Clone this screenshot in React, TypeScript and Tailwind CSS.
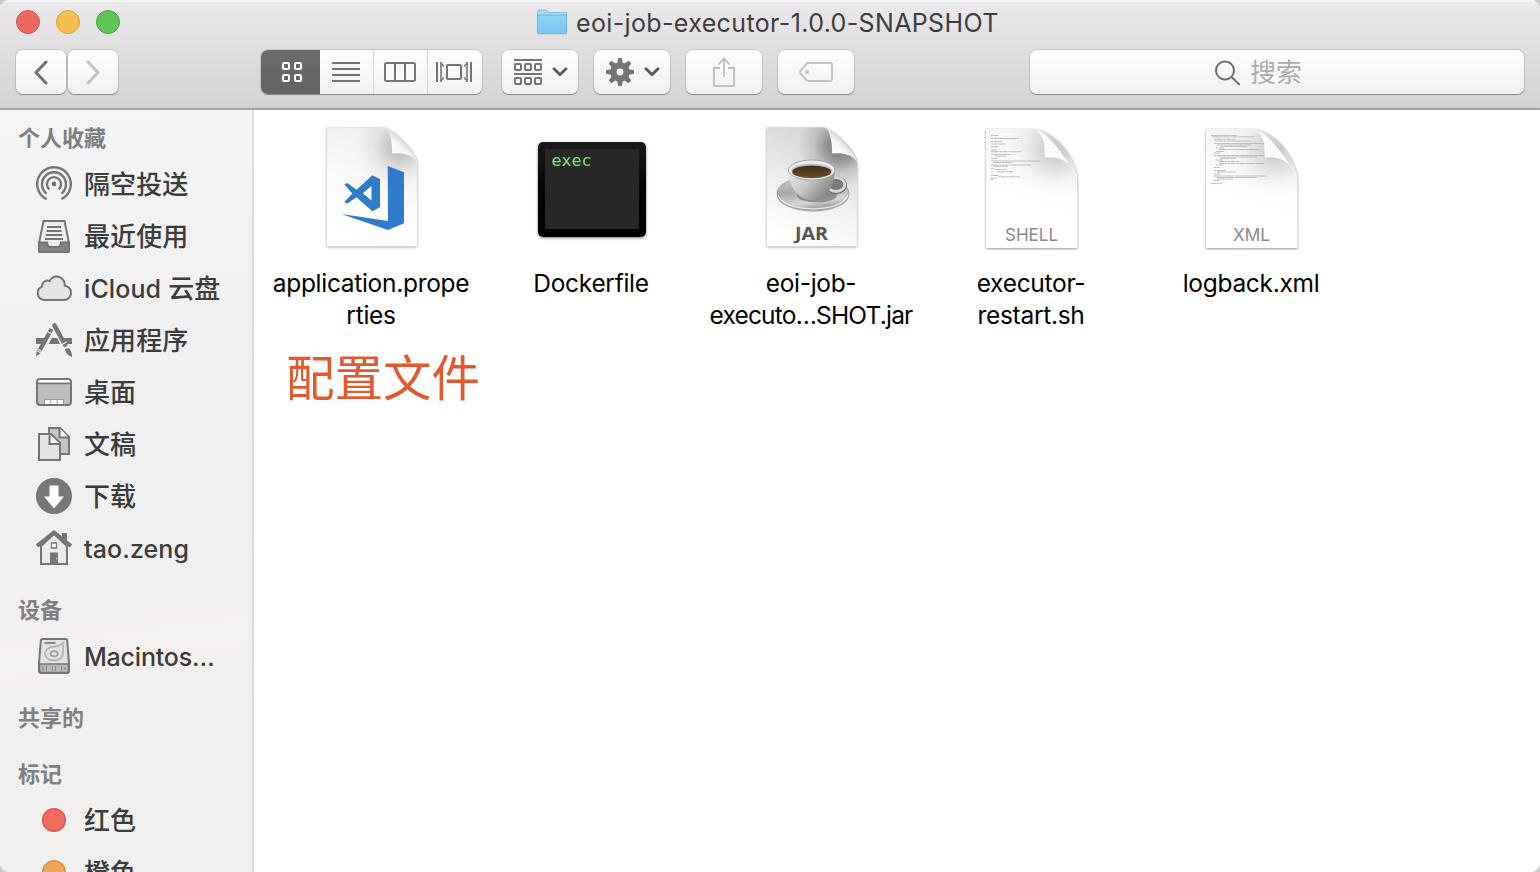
import type { ReactNode } from "react";

const G = "#757575";

/* ---------- toolbar ---------- */

const btn =
  "flex h-[44px] items-center justify-center rounded-[7px] bg-gradient-to-b from-[#fefefe] to-[#f1f1f1] shadow-[0_0_0_1px_rgba(0,0,0,0.11),0_1px_1px_rgba(0,0,0,0.3)]";

function Chevron() {
  return (
    <svg width="16" height="10" viewBox="0 0 16 10" fill="none" stroke="#5a5a5a" strokeWidth="2.8" strokeLinecap="round" strokeLinejoin="round">
      <path d="M2 1.8 8 7.8 14 1.8" />
    </svg>
  );
}

function Squares({ xs, ys, s, color, w }: { xs: number[]; ys: number[]; s: number; color: string; w: number }) {
  return (
    <g fill="none" stroke={color} strokeWidth={w}>
      {ys.map((y) => xs.map((x) => <rect key={`${x}-${y}`} x={x} y={y} width={s} height={s} rx="1" />))}
    </g>
  );
}

function Gear() {
  const teeth = [0, 45, 90, 135, 180, 225, 270, 315];
  return (
    <svg width="28" height="28" viewBox="0 0 28 28">
      <g fill={G}>
        {teeth.map((a) => (
          <path key={a} d="M11.2 6 12 0.6Q12.1 0 12.7 0H15.3Q15.9 0 16 0.6L16.8 6Z" transform={`rotate(${a} 14 14)`} />
        ))}
      </g>
      <circle cx="14" cy="14" r="6.6" fill="none" stroke={G} strokeWidth="6.4" />
    </svg>
  );
}

function Toolbar() {
  return (
    <div className="flex h-[44px] items-center pl-[16px]">
      <div className="flex gap-[2px]">
        <button className={`${btn} w-[50px]`}>
          <svg width="14" height="25" viewBox="0 0 14 25" fill="none" stroke="#6f6f6f" strokeWidth="3" strokeLinecap="round" strokeLinejoin="round">
            <path d="M12 2 2 12.5 12 23" />
          </svg>
        </button>
        <button className={`${btn} w-[50px]`}>
          <svg width="14" height="25" viewBox="0 0 14 25" fill="none" stroke="#c3c3c3" strokeWidth="3" strokeLinecap="round" strokeLinejoin="round">
            <path d="M2 2 12 12.5 2 23" />
          </svg>
        </button>
      </div>

      <div className={`${btn} ml-[143px] w-[221px] overflow-hidden`}>
        <div className="flex h-full w-[59px] items-center justify-center bg-gradient-to-b from-[#6b6b6b] to-[#646464] pl-[3px]">
          <svg width="20" height="20" viewBox="0 0 20 20">
            <Squares xs={[1, 13]} ys={[1, 13]} s={6} color="#fff" w={2} />
          </svg>
        </div>
        <div className="flex h-full w-[53px] items-center justify-center pr-px">
          <svg width="28" height="20" viewBox="0 0 28 20" fill={G}>
            <path d="M0 0h28v2H0zM0 6h28v2H0zM0 12h28v2H0zM0 18h28v2H0z" />
          </svg>
        </div>
        <div className="flex h-full w-[54px] items-center justify-center border-l border-[#d6d6d6] pr-[2px]">
          <svg width="32" height="20" viewBox="0 0 32 20" fill="none" stroke={G} strokeWidth="2">
            <rect x="1" y="1" width="30" height="18" rx="1.5" />
            <path d="M11 1v18M21 1v18" />
          </svg>
        </div>
        <div className="flex h-full w-[55px] items-center justify-center border-l border-[#d6d6d6] pr-[2px]">
          <svg width="36" height="20" viewBox="0 0 36 20" fill="none" stroke={G} strokeWidth="2">
            <rect x="11" y="3" width="14" height="14" rx="1" />
            <path d="M1 0v20M35 0v20" />
            <path d="M5 0v20M31 0v20" strokeWidth="1.6" />
            <path d="M5 1 8 4.5M5 19 8 15.5M31 1 28 4.5M31 19 28 15.5" strokeWidth="1.2" />
          </svg>
        </div>
      </div>

      <div className="ml-[20px] flex gap-[16px]">
        <button className={`${btn} w-[76px] gap-[10px] pl-[2px]`}>
          <svg width="28" height="26" viewBox="0 0 28 26">
            <path d="M0 0h28v2H0zM0 14h28v2H0z" fill={G} />
            <Squares xs={[1, 11, 21]} ys={[5, 19]} s={6} color={G} w={2} />
          </svg>
          <Chevron />
        </button>
        <button className={`${btn} w-[76px] gap-[10px] pl-[2px]`}>
          <Gear />
          <Chevron />
        </button>
        <button className={`${btn} w-[76px]`}>
          <svg width="24" height="30" viewBox="0 0 24 30" fill="none" stroke="#c2c2c2" strokeWidth="2" className="mb-px">
            <path d="M8 11H2v18h20V11h-6M12 20V2M6.500 7.500 12 1.500 17.500 7.500" />
          </svg>
        </button>
        <button className={`${btn} w-[76px]`}>
          <svg width="34" height="20" viewBox="0 0 34 20" fill="none" stroke="#c2c2c2" strokeWidth="2">
            <path d="M9.500 1H31a2 2 0 0 1 2 2v14a2 2 0 0 1-2 2H9.500Q8.200 19 7.400 18L1.600 11.300Q.700 10 1.600 8.700L7.400 2Q8.200 1 9.500 1Z" />
            <circle cx="8" cy="10" r="2" fill="#c2c2c2" stroke="none" />
          </svg>
        </button>
      </div>

      <div className={`${btn} ml-[176px] w-[494px] gap-[10px] pr-[38px]`}>
        <svg width="26" height="26" viewBox="0 0 26 26" fill="none" stroke="#6e6e6e" strokeWidth="2" className="mt-[2px]">
          <circle cx="11" cy="10.500" r="9" />
          <path d="M17.500 17 25.500 24.700" />
        </svg>
        <span className="mt-[2px] text-[26px] leading-[32px] text-[#adadad]">搜索</span>
      </div>
    </div>
  );
}

/* ---------- sidebar ---------- */

function Icon({ children }: { children: ReactNode }) {
  return (
    <svg width="36" height="36" viewBox="0 0 36 36" fill="none" stroke={G} strokeWidth="2" className="shrink-0">
      {children}
    </svg>
  );
}

const AirDrop = (
  <Icon>
    <g strokeWidth="2.4">
      <path d="M10.600 33.100A16.800 16.800 0 1 1 25.400 33.100" />
      <path d="M10.500 27.600A12 12 0 1 1 25.500 27.600" />
      <path d="M13.400 23.400A7 7 0 1 1 22.600 23.400" />
    </g>
    <circle cx="18" cy="18" r="2.400" fill={G} stroke="none" />
  </Icon>
);
const Recents = (
  <Icon>
    <path d="M7.500 3h21l4.500 22v7.500q0 1.500-1.500 1.500h-27Q3 34 3 32.500V25z" fill="#ededed" />
    <path d="M3 24.500h8q.5 4.500 4 4.500h6q3.500 0 4-4.500h8v8q0 1.500-1.500 1.500h-27Q3 34 3 32.500z" fill="#828282" />
    <path d="M11 9h14M10.500 13h15M9.700 17h16.600M9 21h18" />
  </Icon>
);
const Cloud = (
  <Icon>
    <path d="M8 30.500a7 7 0 0 1-2-13.400C6 12.500 10 10 13.600 11.600 15.500 8 18.500 6.500 21.500 7c5 .700 7.700 5 7.200 9.300 4 .700 6.300 3.700 6.300 7.200 0 4-3.200 7-7 7z" fill="#e4e4e5" transform="translate(0 -.5)" />
  </Icon>
);
const Apps = (
  <Icon>
    <path d="M0 16h8.500L5.500 22H0zM15.800 16h5.400l2.800 6H12.500zM27.500 16H36v6h-5z" fill={G} stroke="none" />
    <path d="M15.500 7 3 29.500" strokeWidth="4.200" />
    <path d="M18.500 3.500 29.200 23" strokeWidth="4.600" strokeLinecap="round" />
    <path d="M0 34.500.800 29.200 4.400 31.200Z" fill={G} stroke="none" />
    <path d="M11.500 9.500 16 12M2 27.200 6.500 30" stroke="#f1f1f2" strokeWidth="1.200" />
    <path d="M26 22.500 30.500 20M27.800 26.500 32.500 24" stroke="#f1f1f2" strokeWidth="1.200" />
    <path d="M29 27.500c2-2 4-1.500 5 0 1.500 2.500 2 4.500 2 7.500-3-1-6.500-4-7-7.500z" fill={G} stroke="none" />
  </Icon>
);
const Desktop = (
  <Icon>
    <rect x="1" y="5" width="34" height="26" rx="3" fill="#bdbdbd" />
    <path d="M2 8.500V8q0-2 2-2h28q2 0 2 2v.500z" fill="#fff" stroke="none" />
    <path d="M1 9.500h34" strokeWidth="1.500" />
    <path d="M9 26h5v4H9zM15.500 26h5v4h-5zM22 26h5v4h-5z" fill="#fff" stroke="none" />
    <path d="M8.500 30v-4.500h19V30" strokeWidth="1" stroke="#999" />
  </Icon>
);
const Docs = (
  <Icon>
    <path d="M13 2h11l9 9v17H13z" fill="#c6c6c6" />
    <path d="M23.500 2v9.500H33" fill="#f2f2f2" />
    <path d="M3 8h12l9 9v17H3z" fill="#e4e4e4" />
    <path d="M13.500 8v10H24" fill="#f2f2f2" />
  </Icon>
);
const Downloads = (
  <Icon>
    <circle cx="18" cy="18" r="18" fill="#777" stroke="none" />
    <path d="M13.500 7.500h9v11H28L18 30.500 8 18.500h5.500z" fill="#fff" stroke="none" />
  </Icon>
);
const Home = (
  <Icon>
    <path d="M5 16v18h26V16L18 4z" fill="#ebebeb" />
    <path d="M26 3h5v11l-5-5z" fill={G} stroke="none" />
    <path d="M1 16 18 2.500 35 16" strokeWidth="4" />
    <path d="M15.500 13h5v5h-5z" strokeWidth="1.300" fill="#fff" />
    <path d="M14 22.500h8V34h-8z" fill={G} stroke="none" />
    <circle cx="20.500" cy="28.500" r=".8" fill="#ddd" stroke="none" />
  </Icon>
);
const Disk = (
  <Icon>
    <path d="M6.500 1h23q1.500 0 1.700 1.500L33 26v7q0 2-2 2H5q-2 0-2-2v-7L4.800 2.500Q5 1 6.500 1z" fill="#e3e2e1" />
    <path d="M3.500 26h29v6.500q0 2-2 2h-25q-2 0-2-2z" fill="#b9b8b7" strokeWidth="1.500" />
    <path d="M7 28v5M10.500 28v5M16.500 28v5M19.500 28v5M25.500 28v5" stroke="#8d8d8d" strokeWidth="1" />
    <circle cx="29" cy="30.500" r="1" fill={G} stroke="none" />
    <path d="M8.500 5h11" strokeWidth="1.600" />
    <path d="M27.500 4.500C27.500 7 27 9 27 13c.500 6-3.500 9.500-8.500 9.500-5.500 0-9.500-3-9.500-7s4.500-6.800 9-6.800c4 0 6.500-1.500 9.500-4.200z" stroke="#b4b4b4" strokeWidth="1.700" />
    <ellipse cx="18.300" cy="15.700" rx="3.600" ry="2.600" stroke="#a0a0a0" strokeWidth="1.700" />
  </Icon>
);

function Dot({ fill, border }: { fill: string; border: string }) {
  return (
    <svg width="36" height="36" viewBox="0 0 36 36" className="shrink-0">
      <circle cx="18" cy="18" r="11.300" fill={fill} stroke={border} strokeWidth="1.500" />
    </svg>
  );
}

function Heading({ children, first }: { children: ReactNode; first?: boolean }) {
  return (
    <h2
      className={`flex h-[42px] shrink-0 items-center pl-[18px] text-[22px] leading-[32px] font-bold text-[#808082] ${first ? "mt-[7px]" : "mt-[14px]"}`}
    >
      {children}
    </h2>
  );
}

function Item({ icon, children }: { icon: ReactNode; children: ReactNode }) {
  return (
    <div className="flex h-[52px] shrink-0 items-center gap-[12px] pl-[36px]">
      <div className="-mt-[2px]">{icon}</div>
      <span className="text-[26px] leading-[32px] font-[450] tracking-[0.1px] whitespace-nowrap text-[#3c3c3c]">{children}</span>
    </div>
  );
}

function Sidebar() {
  return (
    <aside className="flex h-full w-[254px] shrink-0 flex-col overflow-hidden border-r-2 border-[#dadadb] bg-[linear-gradient(172deg,#f5f5f6_0%,#f0f0f2_35%,#f1f0f0_58%,#f4f1ef_70%,#f1f0ef_78%,#f1f0ef_100%)]">
      <Heading first>个人收藏</Heading>
      <Item icon={AirDrop}>隔空投送</Item>
      <Item icon={Recents}>最近使用</Item>
      <Item icon={Cloud}>
        <span className="text-[25px]">iCloud</span> 云盘
      </Item>
      <Item icon={Apps}>应用程序</Item>
      <Item icon={Desktop}>桌面</Item>
      <Item icon={Docs}>文稿</Item>
      <Item icon={Downloads}>下载</Item>
      <Item icon={Home}>
        <span className="text-[25px]">tao.zeng</span>
      </Item>
      <Heading>设备</Heading>
      <Item icon={Disk}>
        <span className="text-[25px] tracking-[-0.2px]">Macintos…</span>
      </Item>
      <Heading>共享的</Heading>
      <Heading>标记</Heading>
      <Item icon={<Dot fill="#f06c62" border="#e2554b" />}>红色</Item>
      <Item icon={<Dot fill="#eda55a" border="#e2923f" />}>橙色</Item>
    </aside>
  );
}

/* ---------- file icons ---------- */

function Page({ id, dark, children }: { id: string; dark?: boolean; children: ReactNode }) {
  const body = "M15.800 7.500H73C83 9 106 32 106.200 43V126.500H15.800z";
  return (
    <svg width="120" height="136" viewBox="0 0 120 136" className="block">
      <defs>
        <linearGradient id={`${id}p`} x1="0.7" y1="0" x2="0.4" y2="1">
          <stop offset="0" stopColor={dark ? "#d2d2d2" : "#ececec"} />
          <stop offset="0.6" stopColor={dark ? "#f0f0f0" : "#fbfbfb"} />
          <stop offset="1" stopColor="#fff" />
        </linearGradient>
        <linearGradient id={`${id}f`} gradientUnits="userSpaceOnUse" x1="80" y1="34" x2="93" y2="20">
          <stop offset="0" stopColor="#fff" />
          <stop offset="0.6" stopColor="#f8f8f8" />
          <stop offset="1" stopColor="#d4d4d4" />
        </linearGradient>
        <radialGradient id={`${id}s`} gradientUnits="userSpaceOnUse" cx="88" cy="28" r="42">
          <stop offset="0" stopColor="#000" stopOpacity={dark ? 0.45 : 0.24} />
          <stop offset="0.3" stopColor="#000" stopOpacity={dark ? 0.33 : 0.15} />
          <stop offset="0.6" stopColor="#000" stopOpacity={dark ? 0.12 : 0.05} />
          <stop offset="1" stopColor="#000" stopOpacity="0" />
        </radialGradient>
        <filter id={`${id}b`} x="-20%" y="-20%" width="140%" height="140%">
          <feGaussianBlur stdDeviation="1.2" />
        </filter>
      </defs>
      <path d={body} fill="#000" opacity="0.42" filter={`url(#${id}b)`} transform="translate(0 .8)" />
      <path d={body} fill={`url(#${id}p)`} />
      <path d={body} fill={`url(#${id}s)`} />
      <path d="M73 7.500C79 9.500 81 20 81.200 33.500 92 32.500 102 34.500 106.200 42.500 104 31 85 9.500 73 7.500z" fill={`url(#${id}f)`} />
      {children}
    </svg>
  );
}

function VsCodeFile() {
  return (
    <Page id="vs">
      <g fill="#2f7bc9" transform="translate(-311 -120)">
        <path d="M387.700 166 404 172.300V223.300L388 230 341.300 214 388 221z" />
        <path fillRule="evenodd" d="M372.300 175.300 380 179V207.200L372.300 211.300 356.500 197.300 347.300 203.400 344.300 202 352.300 193.400 344.300 184.300 347.300 183 356.500 189.700zM371.500 186 362.700 193.300 371.500 200.500z" />
      </g>
    </Page>
  );
}

function JarFile() {
  return (
    <Page id="jar" dark>
      <defs>
        <linearGradient id="saucer" x1="0" y1="0" x2="0.3" y2="1">
          <stop offset="0" stopColor="#cfcfcf" />
          <stop offset="0.5" stopColor="#a8a8a8" />
          <stop offset="0.85" stopColor="#d6d6d6" />
          <stop offset="1" stopColor="#a8a8a8" />
        </linearGradient>
        <linearGradient id="cup" x1="0" y1="0" x2="1" y2="0.5">
          <stop offset="0" stopColor="#e6e6e6" />
          <stop offset="0.5" stopColor="#c6c6c6" />
          <stop offset="1" stopColor="#838383" />
        </linearGradient>
        <linearGradient id="coffee" x1="0" y1="0" x2="0" y2="1">
          <stop offset="0" stopColor="#3d2d1c" />
          <stop offset="1" stopColor="#6a4f29" />
        </linearGradient>
      </defs>
      <ellipse cx="62" cy="74.800" rx="36.300" ry="16.600" fill="#555" opacity="0.45" />
      <ellipse cx="62" cy="73" rx="36" ry="16.500" fill="url(#saucer)" stroke="#8a8a8a" strokeWidth="0.500" />
      <path d="M27 75C30 84 44 88.800 62 88.800S94 84 97 75" fill="none" stroke="#eee" strokeWidth="1.200" />
      <ellipse cx="66" cy="75" rx="20" ry="7.500" fill="#5c5c5c" opacity="0.550" />
      <ellipse cx="85" cy="65" rx="8.800" ry="7" fill="#7c7c7c" stroke="#666" strokeWidth="4.200" />
      <ellipse cx="85" cy="64.500" rx="8.800" ry="7" fill="none" stroke="#d8d8d8" strokeWidth="3" />
      <path d="M37.500 51C38 66 46 80 60.700 80S83.500 66 84 51z" fill="url(#cup)" />
      <ellipse cx="60.700" cy="50" rx="23.300" ry="10" fill="#ececec" stroke="#979797" strokeWidth="0.800" />
      <ellipse cx="60.700" cy="51" rx="20.500" ry="7.600" fill="#c2c2c2" />
      <ellipse cx="60.700" cy="51.800" rx="19.500" ry="6.300" fill="url(#coffee)" />
      <text x="44" y="119.800" textLength="33" lengthAdjust="spacingAndGlyphs" fill="#555" className="font-['Open_Sans'] text-[18px] font-bold">JAR</text>
    </Page>
  );
}

function ExecFile() {
  return (
    <div className="mt-[22px] ml-px h-[95px] w-[108px] rounded-[5px] bg-gradient-to-b from-[#1b1b1b] to-black p-[7px] pb-[8px] shadow-[0_1px_3px_rgba(0,0,0,0.5)]">
      <div className="h-full w-full bg-[#272727] pt-px pl-[7px] font-['DejaVu_Sans_Mono'] text-[16.6px] leading-[22px] text-[#7ce07c]">exec</div>
    </div>
  );
}

type Line = [number, number, number];

function TextFile({ id, kind, lines, x, w }: { id: string; kind: string; lines: Line[]; x: number; w: number }) {
  const body = "M15 9H60C84 9 106.500 38 106.500 61V128H15z";
  return (
    <svg width="120" height="136" viewBox="0 0 120 136" className="block">
      <defs>
        <linearGradient id={`${id}p`} x1="0.5" y1="0" x2="0.350" y2="0.600">
          <stop offset="0" stopColor="#f3f3f3" />
          <stop offset="1" stopColor="#fff" />
        </linearGradient>
        <radialGradient id={`${id}s`} gradientUnits="userSpaceOnUse" cx="84" cy="30" r="46">
          <stop offset="0" stopColor="#000" stopOpacity="0.200" />
          <stop offset="0.400" stopColor="#000" stopOpacity="0.100" />
          <stop offset="0.700" stopColor="#000" stopOpacity="0.030" />
          <stop offset="1" stopColor="#000" stopOpacity="0" />
        </radialGradient>
        <linearGradient id={`${id}f`} gradientUnits="userSpaceOnUse" x1="74" y1="38" x2="90" y2="23">
          <stop offset="0" stopColor="#fff" />
          <stop offset="0.700" stopColor="#fafafa" />
          <stop offset="1" stopColor="#e4e4e4" />
        </linearGradient>
        <filter id={`${id}b`} x="-20%" y="-20%" width="140%" height="140%">
          <feGaussianBlur stdDeviation="1.200" />
        </filter>
      </defs>
      <path d={body} fill="#000" opacity="0.480" filter={`url(#${id}b)`} transform="translate(0 .8)" />
      <path d={body} fill={`url(#${id}p)`} />
      <path d={body} fill={`url(#${id}s)`} />
      <g stroke="#a2a2a2" strokeWidth="0.700" strokeDasharray="2.500 0.400 4 0.300 1.500 0.400">
        {lines.map(([lx, ly, lw], i) => (
          <path key={i} d={`M${lx} ${ly}h${lw}`} />
        ))}
      </g>
      <path d="M60 9C73 11 74 24 73.700 37.500 92 35 104 46 106.500 61 104 50 86 25 75 15.500 70 11.500 66 9.500 60 9z" fill={`url(#${id}f)`} />
      <text x={x} y="121" textLength={w} lengthAdjust="spacingAndGlyphs" fill="#8a8a8a" className="font-['Inter'] text-[17.5px]">{kind}</text>
    </svg>
  );
}

const SHELL_LINES: Line[] = [
  [20, 15.5, 7], [20, 18.5, 28], [20, 21.5, 11], [20, 24, 14], [20, 26.500, 7], [20, 30, 6], [20, 31.700, 30],
  [20, 34.500, 20], [24, 36.200, 11], [20, 38.500, 6], [20, 41, 49], [22, 42.500, 20], [20, 45, 40], [22, 46.300, 15],
  [20, 48.500, 3], [24, 49.500, 11], [20, 51, 1.500], [26, 51.700, 16], [20, 55.500, 7], [27, 56.800, 22], [20, 58, 6], [20, 59.500, 3],
];
const XML_LINES: Line[] = [
  [20, 15.500, 26], [21, 16.800, 42], [23, 19.300, 22], [24, 21, 36], [23, 23.500, 50], [26, 25, 34], [30, 26.500, 26],
  [25, 28, 8], [28, 29.500, 40], [25, 31.500, 8], [23, 33, 6], [23, 35.500, 50], [28, 37, 38], [30, 38.500, 15],
  [25, 40, 7], [28, 41.500, 20], [28, 43.500, 45], [25, 45, 7], [23, 47.500, 6], [23, 50.500, 12], [26, 52, 19],
  [23, 54, 6], [23, 56, 52], [26, 57.500, 40], [26, 59, 16], [23, 60.500, 5], [20, 63.500, 11],
];

function File({ icon, lines, children }: { icon: ReactNode; lines: string[]; children?: ReactNode }) {
  return (
    <div className="flex w-[220px] flex-col items-center">
      <div className="h-[147px]">{icon}</div>
      {lines.map((l) => (
        <span
          key={l}
          className={`text-[24.5px] leading-[32px] whitespace-nowrap text-black ${l.includes("…") ? "tracking-[-0.8px]" : "tracking-[-0.3px]"}`}
        >
          {l}
        </span>
      ))}
      {children}
    </div>
  );
}

export default function App() {
  return (
    <div className="h-[872px] w-[1540px] overflow-hidden bg-[#c9c9c9] font-['Inter','Noto_Sans_CJK_SC',sans-serif]">
      <div className="flex h-full w-full flex-col overflow-hidden rounded-[9px] bg-white">
        <header className="flex h-[110px] shrink-0 flex-col border-b-2 border-[#a3a1a4] bg-gradient-to-b from-[#ebe9ec] to-[#d3d1d4] shadow-[inset_0_2px_0_#f4f3f5]">
          <div className="flex h-[50px] items-center pb-[5px] pl-[16px]">
            <div className="-mt-px flex gap-[16px]">
              <span className="size-[24px] rounded-full border border-[#d8564e] bg-[#ee6a5f]" />
              <span className="size-[24px] rounded-full border border-[#dba53c] bg-[#f5bf4f]" />
              <span className="size-[24px] rounded-full border border-[#4aa73c] bg-[#61c554]" />
            </div>
            <svg width="32" height="26" viewBox="0 0 32 26" className="-mt-px ml-[416px]">
              <defs>
                <linearGradient id="folder" x1="0" y1="0" x2="0" y2="1">
                  <stop offset="0" stopColor="#8ed3f8" />
                  <stop offset="1" stopColor="#79c5f1" />
                </linearGradient>
              </defs>
              <path d="M1.500 24V2q0-1 1-1h7.500l3 2.500H29.500q1 0 1 1V24z" fill="#a0dbf7" stroke="#7cb6d4" strokeWidth="0.800" />
              <path d="M1.500 6H30.500V24q0 .8-.8.8H2.300q-.8 0-.8-.8z" fill="url(#folder)" stroke="#6aa9cb" strokeWidth="0.700" />
            </svg>
            <h1 className="ml-[8px] text-[25px] leading-[32px] tracking-[0.36px] whitespace-nowrap text-[#3e3c40]">eoi-job-executor-1.0.0-SNAPSHOT</h1>
          </div>
          <Toolbar />
        </header>

        <div className="flex min-h-0 flex-1">
          <Sidebar />
          <main className="flex flex-1 items-start bg-white pt-[10px] pl-[7px]">
            <File icon={<VsCodeFile />} lines={["application.prope", "rties"]}>
              <p className="mt-[15px] ml-[24px] text-[48.5px] leading-[66px] font-normal whitespace-nowrap text-[#e2592f]">配置文件</p>
            </File>
            <File icon={<ExecFile />} lines={["Dockerfile"]} />
            <File icon={<JarFile />} lines={["eoi-job-", "executo…SHOT.jar"]} />
            <File icon={<TextFile id="sh" kind="SHELL" lines={SHELL_LINES} x={34} w={53} />} lines={["executor-", "restart.sh"]} />
            <File icon={<TextFile id="xml" kind="XML" lines={XML_LINES} x={42} w={37} />} lines={["logback.xml"]} />
          </main>
        </div>
      </div>
    </div>
  );
}
